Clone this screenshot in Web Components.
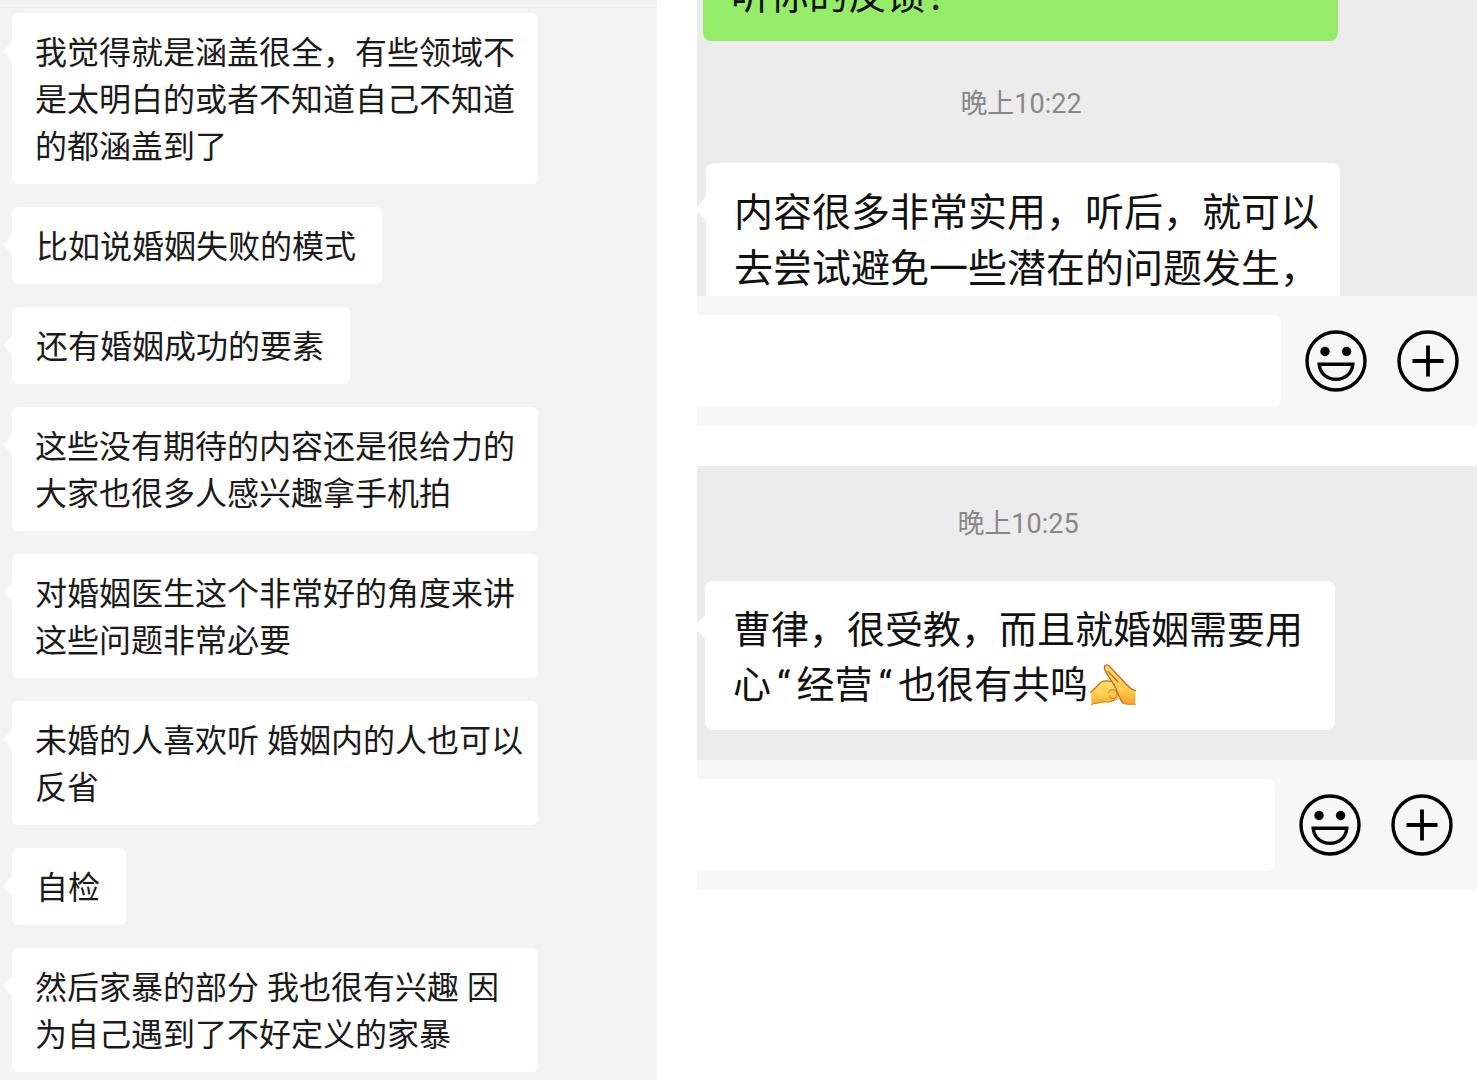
<!DOCTYPE html>
<html lang="zh-CN">
<head>
<meta charset="utf-8">
<title>微信聊天</title>
<style>
    body { margin: 0; background: #fff; font-family: Roboto, "Noto Sans CJK SC", sans-serif; color: #1a1a1a; }
</style>
</head>
<body>
<chat-board>
    <chat-history slot="main">
        <chat-bubble wide>我觉得就是涵盖很全，有些领域不<br>是太明白的或者不知道自己不知道<br>的都涵盖到了</chat-bubble>
        <chat-bubble>比如说婚姻失败的模式</chat-bubble>
        <chat-bubble>还有婚姻成功的要素</chat-bubble>
        <chat-bubble wide>这些没有期待的内容还是很给力的<br>大家也很多人感兴趣拿手机拍</chat-bubble>
        <chat-bubble wide>对婚姻医生这个非常好的角度来讲<br>这些问题非常必要</chat-bubble>
        <chat-bubble wide>未婚的人喜欢听 婚姻内的人也可以<br>反省</chat-bubble>
        <chat-bubble>自检</chat-bubble>
        <chat-bubble wide>然后家暴的部分 我也很有兴趣 因<br>为自己遇到了不好定义的家暴</chat-bubble>
    </chat-history>

    <chat-window slot="side" class="first">
        <chat-bubble large own>听你的反馈！</chat-bubble>
        <chat-time>晚上10:22</chat-time>
        <chat-bubble large>内容很多非常实用，听后，就可以<br>去尝试避免一些潜在的问题发生，</chat-bubble>
        <chat-input slot="footer"></chat-input>
    </chat-window>

    <chat-window slot="side" class="second">
        <chat-time>晚上10:25</chat-time>
        <chat-bubble large>曹律，很受教，而且就婚姻需要用<br>心<chat-quote>“</chat-quote>经营<chat-quote>“</chat-quote>也很有共鸣<hand-emoji></hand-emoji></chat-bubble>
        <chat-input slot="footer"></chat-input>
    </chat-window>
</chat-board>

<style>
    .first {
        --log-height: 296px;
        --log-padding: 0 137px 0 9px;
        --log-scroll: -54px;
        --time-padding: 43px 4px 39px 0;
        --bubble-size: 39px;
        --bubble-line: 56px;
        --bar-right: 18px;
    }
    .second {
        --log-padding: 0 142px 30px 8px;
        --time-padding: 38px 4px 37px 0;
        --bubble-size: 38px;
        --bubble-line: 55px;
        --bar-right: 24px;
    }
</style>

<script>
class ChatBoard extends HTMLElement {

    constructor() {
        super();
        this.attachShadow({ mode: 'open' });
    }

    connectedCallback() {
        this.shadowRoot.innerHTML = `
        <style>
            :host { display: grid; grid-template-columns: 657fr 780fr; column-gap: 40px; min-height: 100vh; }
            aside { display: flex; flex-direction: column; gap: 40px; min-width: 0; }
            main { display: grid; min-width: 0; }
        </style>
        <main><slot name="main"></slot></main>
        <aside><slot name="side"></slot></aside>
        `;
    }
}

class ChatHistory extends HTMLElement {

    constructor() {
        super();
        this.attachShadow({ mode: 'open' });
    }

    connectedCallback() {
        this.shadowRoot.innerHTML = `
        <style>
            :host { display: block; background: #f3f3f3; }
            .edge { height: 7px; border-bottom: 1px solid #eee; }
            .list { display: flex; flex-direction: column; align-items: flex-start; gap: 23px; padding: 5px 12px 6px; }
        </style>
        <div class="edge"></div>
        <div class="list"><slot></slot></div>
        `;
    }
}

class ChatBubble extends HTMLElement {

    constructor() {
        super();
        this.attachShadow({ mode: 'open' });
    }

    connectedCallback() {
        this.shadowRoot.innerHTML = `
        <style>
            :host {
                display: block;
                position: relative;
                box-sizing: border-box;
                max-width: 526px;
                padding: 17px 26px 13px 24px;
                border-radius: 6px;
                background: #fff;
                font-size: 32px;
                line-height: 47px;
                white-space: nowrap;
            }
            :host::before {
                content: "";
                position: absolute;
                left: -9px;
                top: 28px;
                width: 10px;
                height: 20px;
                background: inherit;
                clip-path: polygon(0 50%, 100% 0, 100% 100%);
            }
            :host([wide]) { width: 526px; padding-left: 23px; }
            :host([large]) {
                max-width: none;
                padding: 22px 28px 17px 28px;
                border-radius: 8px;
                color: #111;
                font-size: var(--bubble-size);
                line-height: var(--bubble-line);
            }
            :host([large])::before { left: -11px; top: 33px; width: 12px; height: 26px; }
            :host([own]) { margin: var(--log-scroll) 2px 0 -3px; background: #95ec69; }
            :host([own])::before { display: none; }
        </style>
        <slot></slot>
        `;
    }
}

class ChatQuote extends HTMLElement {

    constructor() {
        super();
        this.attachShadow({ mode: 'open' });
    }

    connectedCallback() {
        this.shadowRoot.innerHTML = `
        <style>
            :host { display: inline-block; margin: 0 6px; font-family: Roboto, sans-serif; }
        </style>
        <slot></slot>
        `;
    }
}

class ChatTime extends HTMLElement {

    constructor() {
        super();
        this.attachShadow({ mode: 'open' });
    }

    connectedCallback() {
        this.shadowRoot.innerHTML = `
        <style>
            :host { display: block; padding: var(--time-padding); color: #888; font-size: 27px; line-height: 40px; text-align: center; }
        </style>
        <slot></slot>
        `;
    }
}

class ChatWindow extends HTMLElement {

    constructor() {
        super();
        this.attachShadow({ mode: 'open' });
    }

    connectedCallback() {
        this.shadowRoot.innerHTML = `
        <style>
            :host { display: block; }
            .log {
                display: flex;
                flex-direction: column;
                box-sizing: border-box;
                height: var(--log-height, auto);
                padding: var(--log-padding);
                overflow: hidden;
                background: #ececec;
            }
        </style>
        <div class="log"><slot></slot></div>
        <slot name="footer"></slot>
        `;
    }
}

class ChatInput extends HTMLElement {

    constructor() {
        super();
        this.attachShadow({ mode: 'open' });
    }

    connectedCallback() {
        this.shadowRoot.innerHTML = `
        <style>
            :host { display: flex; align-items: center; padding: 19px var(--bar-right) 19px 0; background: #f7f7f7; }
            input {
                flex: 1;
                min-width: 0;
                height: 92px;
                box-sizing: border-box;
                margin: 0 24px 0 0;
                padding: 0 24px;
                border: 0;
                border-radius: 0 8px 8px 0;
                background: #fff;
                font: inherit;
                font-size: 38px;
            }
            button { width: 62px; height: 62px; padding: 0; border: 0; background: none; color: #000; }
            button + button { margin-left: 30px; }
            svg { display: block; }
        </style>
        <input type="text" aria-label="消息">
        <button type="button" aria-label="表情">
            <svg width="62" height="62" viewBox="0 0 62 62" fill="none" stroke="currentColor" stroke-width="3.4">
                <circle cx="31" cy="31" r="29"/>
                <circle cx="20" cy="21.5" r="4.7" fill="currentColor" stroke="none"/>
                <circle cx="41.6" cy="21.5" r="4.7" fill="currentColor" stroke="none"/>
                <path d="M14.2 34.3H47.8C47 43.5 40 49.3 31 49.3S15 43.5 14.2 34.3Z"/>
            </svg>
        </button>
        <button type="button" aria-label="更多">
            <svg width="62" height="62" viewBox="0 0 62 62" fill="none" stroke="currentColor" stroke-width="3.4">
                <circle cx="31" cy="31" r="29"/>
                <path d="M31 15.5V46.5M15.5 31H46.5" stroke-width="3.8"/>
            </svg>
        </button>
        `;
    }
}

class HandEmoji extends HTMLElement {

    constructor() {
        super();
        this.attachShadow({ mode: 'open' });
    }

    connectedCallback() {
        this.shadowRoot.innerHTML = `
        <style>
            :host { display: inline-block; height: 42px; margin-left: 2px; vertical-align: -8px; }
            svg { display: block; }
        </style>
        <svg width="46" height="42" viewBox="0 0 138 126" stroke-linecap="round" stroke-linejoin="round">
            <defs>
                <linearGradient id="skin" x1="0" y1="0" x2="0" y2="1">
                    <stop offset="0" stop-color="#ffe078"/>
                    <stop offset="0.65" stop-color="#ffca4c"/>
                    <stop offset="1" stop-color="#f5a02c"/>
                </linearGradient>
            </defs>
            <path fill="url(#skin)" d="M2 84C12 80 20 64 34 54C42 49 62 49 72 54L88 80L84 102C76 112 62 116 52 114C38 113 30 119 20 118C14 119 10 120 5 122Z"/>
            <path fill="url(#skin)" d="M42 10C42 1 52 0 58 7L94 45C106 58 120 76 136 80V121C122 121 110 122 101 119C90 112 88 98 82 84C72 62 50 36 42 10Z"/>
            <g fill="none" stroke="#c46a18" stroke-width="4">
                <path d="M2 84C14 78 20 64 34 54C42 50 52 50 62 52"/>
                <path d="M72 62C58 40 46 26 43 12C42 2 52 0 58 7L94 45C106 58 120 76 136 80"/>
                <path d="M54 22L84 54"/>
                <path d="M72 62C82 78 86 106 100 118"/>
                <path stroke-width="3" d="M54 86C58 76 74 74 80 84C84 94 78 104 68 104C62 104 58 100 60 95"/>
            </g>
            <g fill="none" stroke="#d98425" stroke-width="3">
                <path d="M5 122C12 117 18 120 26 117C38 111 46 116 56 114C68 112 76 108 83 102"/>
                <path d="M100 118C110 123 124 120 136 121"/>
            </g>
        </svg>
        `;
    }
}

customElements.define('chat-board', ChatBoard);
customElements.define('chat-history', ChatHistory);
customElements.define('chat-bubble', ChatBubble);
customElements.define('chat-quote', ChatQuote);
customElements.define('chat-time', ChatTime);
customElements.define('chat-window', ChatWindow);
customElements.define('chat-input', ChatInput);
customElements.define('hand-emoji', HandEmoji);
</script>
</body>
</html>
